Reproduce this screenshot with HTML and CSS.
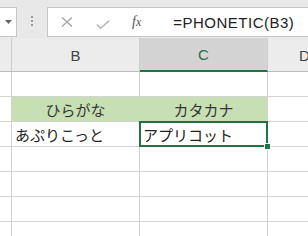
FILE: index.html
```html
<!DOCTYPE html>
<html lang="ja">

<head>
    <meta charset="UTF-8">
    <meta name="viewport" content="width=device-width, initial-scale=1.0">
    <title>PHONETIC</title>
    <link rel="stylesheet" href="styles.css">
</head>

<body>
    <!-- Barra della formula -->
    <div class="toolbar">
        <div class="namebox">
            <svg class="caret" width="7" height="4" viewBox="0 0 7 4"><path d="M0 0H7L3.5 4Z" fill="#666"/></svg>
        </div>
        <div class="grip"><span></span><span></span><span></span></div>
        <div class="formula">
            <svg class="ico" width="12" height="10" viewBox="0 0 12 10"><path d="M1 0.5L11 9.5M11 0.5L1 9.5" stroke="#a6a6a6" stroke-width="1.4" fill="none"/></svg>
            <svg class="ico check" width="14" height="9" viewBox="0 0 14 9"><path d="M0.8 4.6L4.6 8.2L13.2 0.6" stroke="#b8b8b8" stroke-width="1.5" fill="none"/></svg>
            <span class="fx">f<span class="x">x</span></span>
            <span class="text">=PHONETIC(B3)</span>
        </div>
    </div>

    <!-- Intestazioni di colonna -->
    <div class="colhead">
        <div class="hcell"></div>
        <div class="hcell">B</div>
        <div class="hcell active">C</div>
        <div class="hcell last">D</div>
    </div>

    <!-- Griglia -->
    <div class="grid">
        <div class="row">
            <div class="cell a"></div><div class="cell"></div><div class="cell"></div><div class="cell last"></div>
        </div>
        <div class="row">
            <div class="cell a"></div>
            <div class="cell fill center">ひらがな</div>
            <div class="cell fill center edge">カタカナ</div>
            <div class="cell last"></div>
        </div>
        <div class="row">
            <div class="cell a"></div>
            <div class="cell">あぷりこっと</div>
            <div class="cell selected">アプリコット<span class="handle"></span></div>
            <div class="cell last"></div>
        </div>
        <div class="row">
            <div class="cell a"></div><div class="cell"></div><div class="cell"></div><div class="cell last"></div>
        </div>
        <div class="row">
            <div class="cell a"></div><div class="cell"></div><div class="cell"></div><div class="cell last"></div>
        </div>
        <div class="row">
            <div class="cell a"></div><div class="cell"></div><div class="cell"></div><div class="cell last"></div>
        </div>
        <div class="row">
            <div class="cell a"></div><div class="cell"></div><div class="cell"></div><div class="cell last"></div>
        </div>
    </div>
</body>

</html>
```

FILE: styles.css
```css
body {
    margin: 0;
    width: 308px;
    height: 236px;
    overflow: hidden;
    background-color: white;
    font-family: "Liberation Sans", Arial, sans-serif;
}

.toolbar {
    display: flex;
    align-items: flex-start;
    height: 38px;
    padding-top: 7px;
    box-sizing: border-box;
    background-color: #e8e8e8;
}

.namebox {
    display: flex;
    align-items: center;
    width: 18px;
    height: 30px;
    margin-left: -1px;
    background-color: white;
    border: 1px solid #c6c6c6;
    box-sizing: border-box;
}

.caret {
    margin-left: 5px;
}

.grip {
    display: flex;
    flex-direction: column;
    gap: 2px;
    width: 30px;
    padding-top: 9px;
    align-items: center;
    box-sizing: border-box;
}

.grip span {
    width: 2px;
    height: 2px;
    background-color: #9a9a9a;
}

.formula {
    display: flex;
    align-items: center;
    flex: 1;
    height: 30px;
    margin-right: -10px;
    background-color: white;
    border: 1px solid #c6c6c6;
    box-sizing: border-box;
}

.ico {
    margin-left: 13px;
}

.check {
    margin-left: 23px;
    margin-top: 4px;
}

.fx {
    margin-left: 22px;
    font-family: "Liberation Serif", "Times New Roman", serif;
    font-style: italic;
    font-size: 14px;
    color: #555;
    margin-top: -1px;
}

.fx .x {
    font-size: 12px;
}

.text {
    margin-left: 32px;
    font-size: 15px;
    letter-spacing: 0.5px;
    color: #222;
}

.colhead {
    display: grid;
    grid-template-columns: 12px 128px 128px 1fr;
    height: 34px;
    background-color: #ececec;
}

.hcell {
    display: flex;
    align-items: center;
    justify-content: center;
    border-right: 1px solid #cdcdcd;
    border-bottom: 1px solid #bdbdbd;
    font-size: 15px;
    color: #444;
    padding-top: 1px;
    box-sizing: border-box;
}

.hcell.active {
    background-color: #d3d3d3;
    border-bottom: 2px solid #217346;
    color: #2f6b45;
}

.hcell.last {
    border-right: none;
    justify-content: flex-start;
    padding-left: 31px;
}

.row {
    display: grid;
    grid-template-columns: 12px 128px 128px 1fr;
    height: 25px;
}

.cell {
    position: relative;
    display: flex;
    align-items: center;
    padding-left: 3px;
    border-right: 1px solid #d4d4d4;
    border-bottom: 1px solid #d4d4d4;
    box-sizing: border-box;
    font-family: "Noto Sans CJK JP", sans-serif;
    font-size: 15px;
    color: #222;
    white-space: nowrap;
}

.cell.last {
    border-right: none;
}

.fill {
    background-color: #c6e0b4;
    border-right-color: #c6e0b4;
    color: #333;
}

.fill.edge {
    border-right-color: #d4d4d4;
}

.center {
    justify-content: center;
    padding-left: 0;
}

.selected::after {
    content: "";
    position: absolute;
    left: -1px;
    top: -1px;
    right: -1px;
    bottom: -1px;
    border: 2px solid #217346;
}

.handle {
    position: absolute;
    right: -4px;
    bottom: -4px;
    width: 5px;
    height: 5px;
    background-color: #217346;
    border: 1px solid white;
    z-index: 1;
}
```
